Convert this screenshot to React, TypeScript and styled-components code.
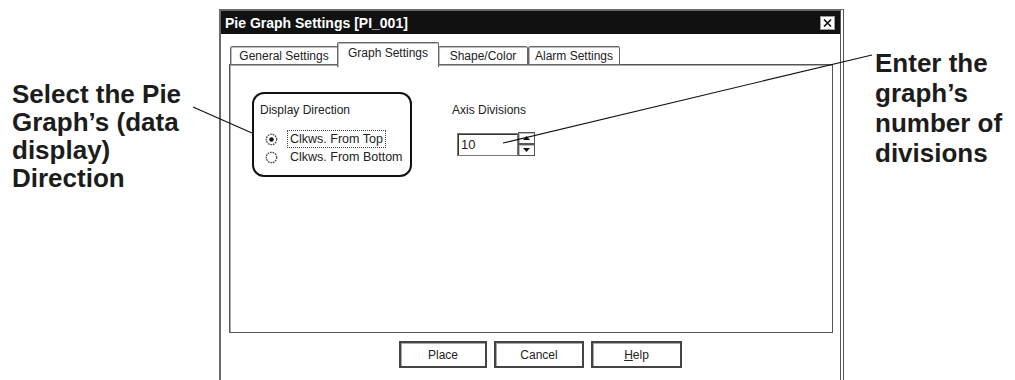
import styled, { createGlobalStyle } from 'styled-components';

const GlobalStyle = createGlobalStyle`
    html, body {
        margin: 0;
        padding: 0;
        background: #ffffff;
    }
`;

const Page = styled.div`
    position: relative;
    width: 1015px;
    height: 380px;
    overflow: hidden;
    background: #ffffff;
    display: flex;
    align-items: flex-start;
    font-family: 'Liberation Sans', Arial, sans-serif;
`;

const Note = styled.div<{ $width?: number; $top: number; $left: number; $lineHeight: number }>`
    width: ${({ $width }) => ($width ? `${$width}px` : 'auto')};
    flex-shrink: 0;
    box-sizing: border-box;
    padding-top: ${({ $top }) => $top}px;
    padding-left: ${({ $left }) => $left}px;
    font-size: 26px;
    line-height: ${({ $lineHeight }) => $lineHeight}px;
    font-weight: 700;
    color: #1c1c1c;
    white-space: nowrap;
`;

const Dialog = styled.div`
    flex-shrink: 0;
    width: 625px;
    height: 400px;
    margin-top: 9px;
    box-sizing: border-box;
    border-left: 2px solid #6a6a6a;
    border-top: 2px solid #6a6a6a;
    border-right: 4px double #555;
    display: flex;
    flex-direction: column;
    color: #222;
`;

const TitleBar = styled.div`
    height: 23px;
    background: #111;
    color: #fff;
    font-size: 14px;
    font-weight: 700;
    display: flex;
    align-items: center;
    justify-content: space-between;
    padding: 0 5px 0 4px;
`;

const CloseButton = styled.div`
    width: 13px;
    height: 12px;
    background: #fff;
    border: 1px solid #999;
    display: flex;
    align-items: center;
    justify-content: center;
`;

const Body = styled.div`
    padding: 9px 0 0 8px;
    display: flex;
    flex-direction: column;
`;

const TabRow = styled.div`
    display: flex;
    align-items: flex-end;
    height: 23px;
    margin-left: 1px;
    margin-bottom: -2px;
    position: relative;
    z-index: 1;
`;

const Tab = styled.div<{ $width: number; $active?: boolean }>`
    width: ${({ $width }) => $width}px;
    height: ${({ $active }) => ($active ? 25 : 19)}px;
    box-sizing: border-box;
    border: 1px solid #666;
    border-bottom: ${({ $active }) => ($active ? 'none' : '1px solid #666')};
    border-radius: 2px 2px 0 0;
    box-shadow: inset 1px 1px 0 #bbb;
    background: #fff;
    font-size: 12px;
    display: flex;
    justify-content: center;
    align-items: ${({ $active }) => ($active ? 'flex-start' : 'center')};
    padding-top: ${({ $active }) => ($active ? '3px' : '0')};
    margin-left: ${({ $active }) => ($active ? '-1px' : '0')};
    margin-right: ${({ $active }) => ($active ? '-1px' : '0')};
    margin-bottom: ${({ $active }) => ($active ? '-1px' : '1px')};
`;

const Panel = styled.div`
    width: 604px;
    height: 269px;
    box-sizing: border-box;
    border: 1px solid #555;
    box-shadow: inset 1px 1px 0 #aaa;
    padding: 27px 0 0 22px;
    display: flex;
    gap: 40px;
    align-items: flex-start;
`;

const Group = styled.div`
    width: 160px;
    height: 85px;
    box-sizing: border-box;
    border: 2px solid #111;
    border-radius: 12px;
    padding: 9px 0 0 6px;
    font-size: 12px;
`;

const Label = styled.div`
    font-size: 12px;
    line-height: 14px;
`;

const RadioList = styled.div`
    margin-top: 13px;
    padding-left: 5px;
    display: flex;
    flex-direction: column;
`;

const RadioRow = styled.div`
    height: 18px;
    display: flex;
    align-items: center;
    gap: 12px;
    font-size: 12.5px;
`;

const RadioText = styled.span<{ $focused?: boolean }>`
    padding: 1px 2px;
    margin-left: -3px;
    border: 1px dotted ${({ $focused }) => ($focused ? '#444' : 'transparent')};
`;

const AxisColumn = styled.div`
    padding-top: 11px;
    display: flex;
    flex-direction: column;
`;

const SpinBox = styled.div`
    margin-top: 15px;
    margin-left: 5px;
    display: flex;
    align-items: center;
`;

const NumberField = styled.div`
    width: 61px;
    height: 23px;
    box-sizing: border-box;
    border: 1px solid #777;
    box-shadow: inset 1px 1px 0 #333;
    font-size: 13px;
    display: flex;
    align-items: center;
    padding-left: 3px;
`;

const SpinButtons = styled.div`
    display: flex;
    flex-direction: column;
`;

const SpinButton = styled.div`
    width: 17px;
    height: 12px;
    box-sizing: border-box;
    border: 1px solid #555;
    box-shadow: inset 1px 1px 0 #bbb;
    background: #fff;
    display: flex;
    align-items: center;
    justify-content: center;
`;

const ButtonRow = styled.div`
    margin-top: 8px;
    padding-left: 12px;
    display: flex;
    justify-content: center;
    gap: 7px;
`;

const Button = styled.div<{ $width: number }>`
    width: ${({ $width }) => $width}px;
    height: 27px;
    box-sizing: border-box;
    border: 2px solid #444;
    box-shadow: inset 1px 1px 0 #aaa;
    font-size: 12px;
    display: flex;
    align-items: center;
    justify-content: center;
`;

const Overlay = styled.svg`
    position: absolute;
    left: 0;
    top: 0;
    pointer-events: none;
`;

const RadioIcon = ({ checked = false }: { checked?: boolean }) => (
    <svg width="13" height="13" viewBox="0 0 13 13">
        <circle cx="6.5" cy="6.5" r="5.2" fill="none" stroke="#444" strokeWidth="1.3" strokeDasharray="1.6 0.9" />
        {checked && <circle cx="6.5" cy="6.5" r="2.2" fill="#111" />}
    </svg>
);

const Arrow = ({ up = false }: { up?: boolean }) => (
    <svg width="7" height="4" viewBox="0 0 7 4">
        <path d={up ? 'M0 4 L3.5 0 L7 4 Z' : 'M0 0 L3.5 4 L7 0 Z'} fill="#111" />
    </svg>
);

const App = () => {
    return (
        <>
            <GlobalStyle />
            <Page>
                <Note $width={219} $top={80} $left={12} $lineHeight={28}>
                    Select the Pie
                    <br />
                    Graph’s (data
                    <br />
                    display)
                    <br />
                    Direction
                </Note>

                <Dialog>
                    <TitleBar>
                        <span>Pie Graph Settings [PI_001]</span>
                        <CloseButton>
                            <svg width="9" height="8" viewBox="0 0 9 8">
                                <path d="M1 0.5 L8 7.5 M8 0.5 L1 7.5" stroke="#111" strokeWidth="1.6" />
                            </svg>
                        </CloseButton>
                    </TitleBar>

                    <Body>
                        <TabRow>
                            <Tab $width={108}>General Settings</Tab>
                            <Tab $width={102} $active>Graph Settings</Tab>
                            <Tab $width={90}>Shape/Color</Tab>
                            <Tab $width={92}>Alarm Settings</Tab>
                        </TabRow>

                        <Panel>
                            <Group>
                                <Label>Display Direction</Label>
                                <RadioList>
                                    <RadioRow>
                                        <RadioIcon checked />
                                        <RadioText $focused>Clkws. From Top</RadioText>
                                    </RadioRow>
                                    <RadioRow>
                                        <RadioIcon />
                                        <RadioText>Clkws. From Bottom</RadioText>
                                    </RadioRow>
                                </RadioList>
                            </Group>

                            <AxisColumn>
                                <Label>Axis Divisions</Label>
                                <SpinBox>
                                    <NumberField>10</NumberField>
                                    <SpinButtons>
                                        <SpinButton>
                                            <Arrow up />
                                        </SpinButton>
                                        <SpinButton>
                                            <Arrow />
                                        </SpinButton>
                                    </SpinButtons>
                                </SpinBox>
                            </AxisColumn>
                        </Panel>

                        <ButtonRow>
                            <Button $width={88}>Place</Button>
                            <Button $width={90}>Cancel</Button>
                            <Button $width={91}>
                                <span>
                                    <u>H</u>elp
                                </span>
                            </Button>
                        </ButtonRow>
                    </Body>
                </Dialog>

                <Note $top={48} $left={31} $lineHeight={30}>
                    Enter the
                    <br />
                    graph’s
                    <br />
                    number of
                    <br />
                    divisions
                </Note>

                <Overlay width="1015" height="380" viewBox="0 0 1015 380">
                    <line x1="193" y1="107" x2="252" y2="133" stroke="#111" strokeWidth="1.2" />
                    <line x1="503" y1="143" x2="872" y2="55" stroke="#111" strokeWidth="1.2" />
                </Overlay>
            </Page>
        </>
    );
};

export default App;
